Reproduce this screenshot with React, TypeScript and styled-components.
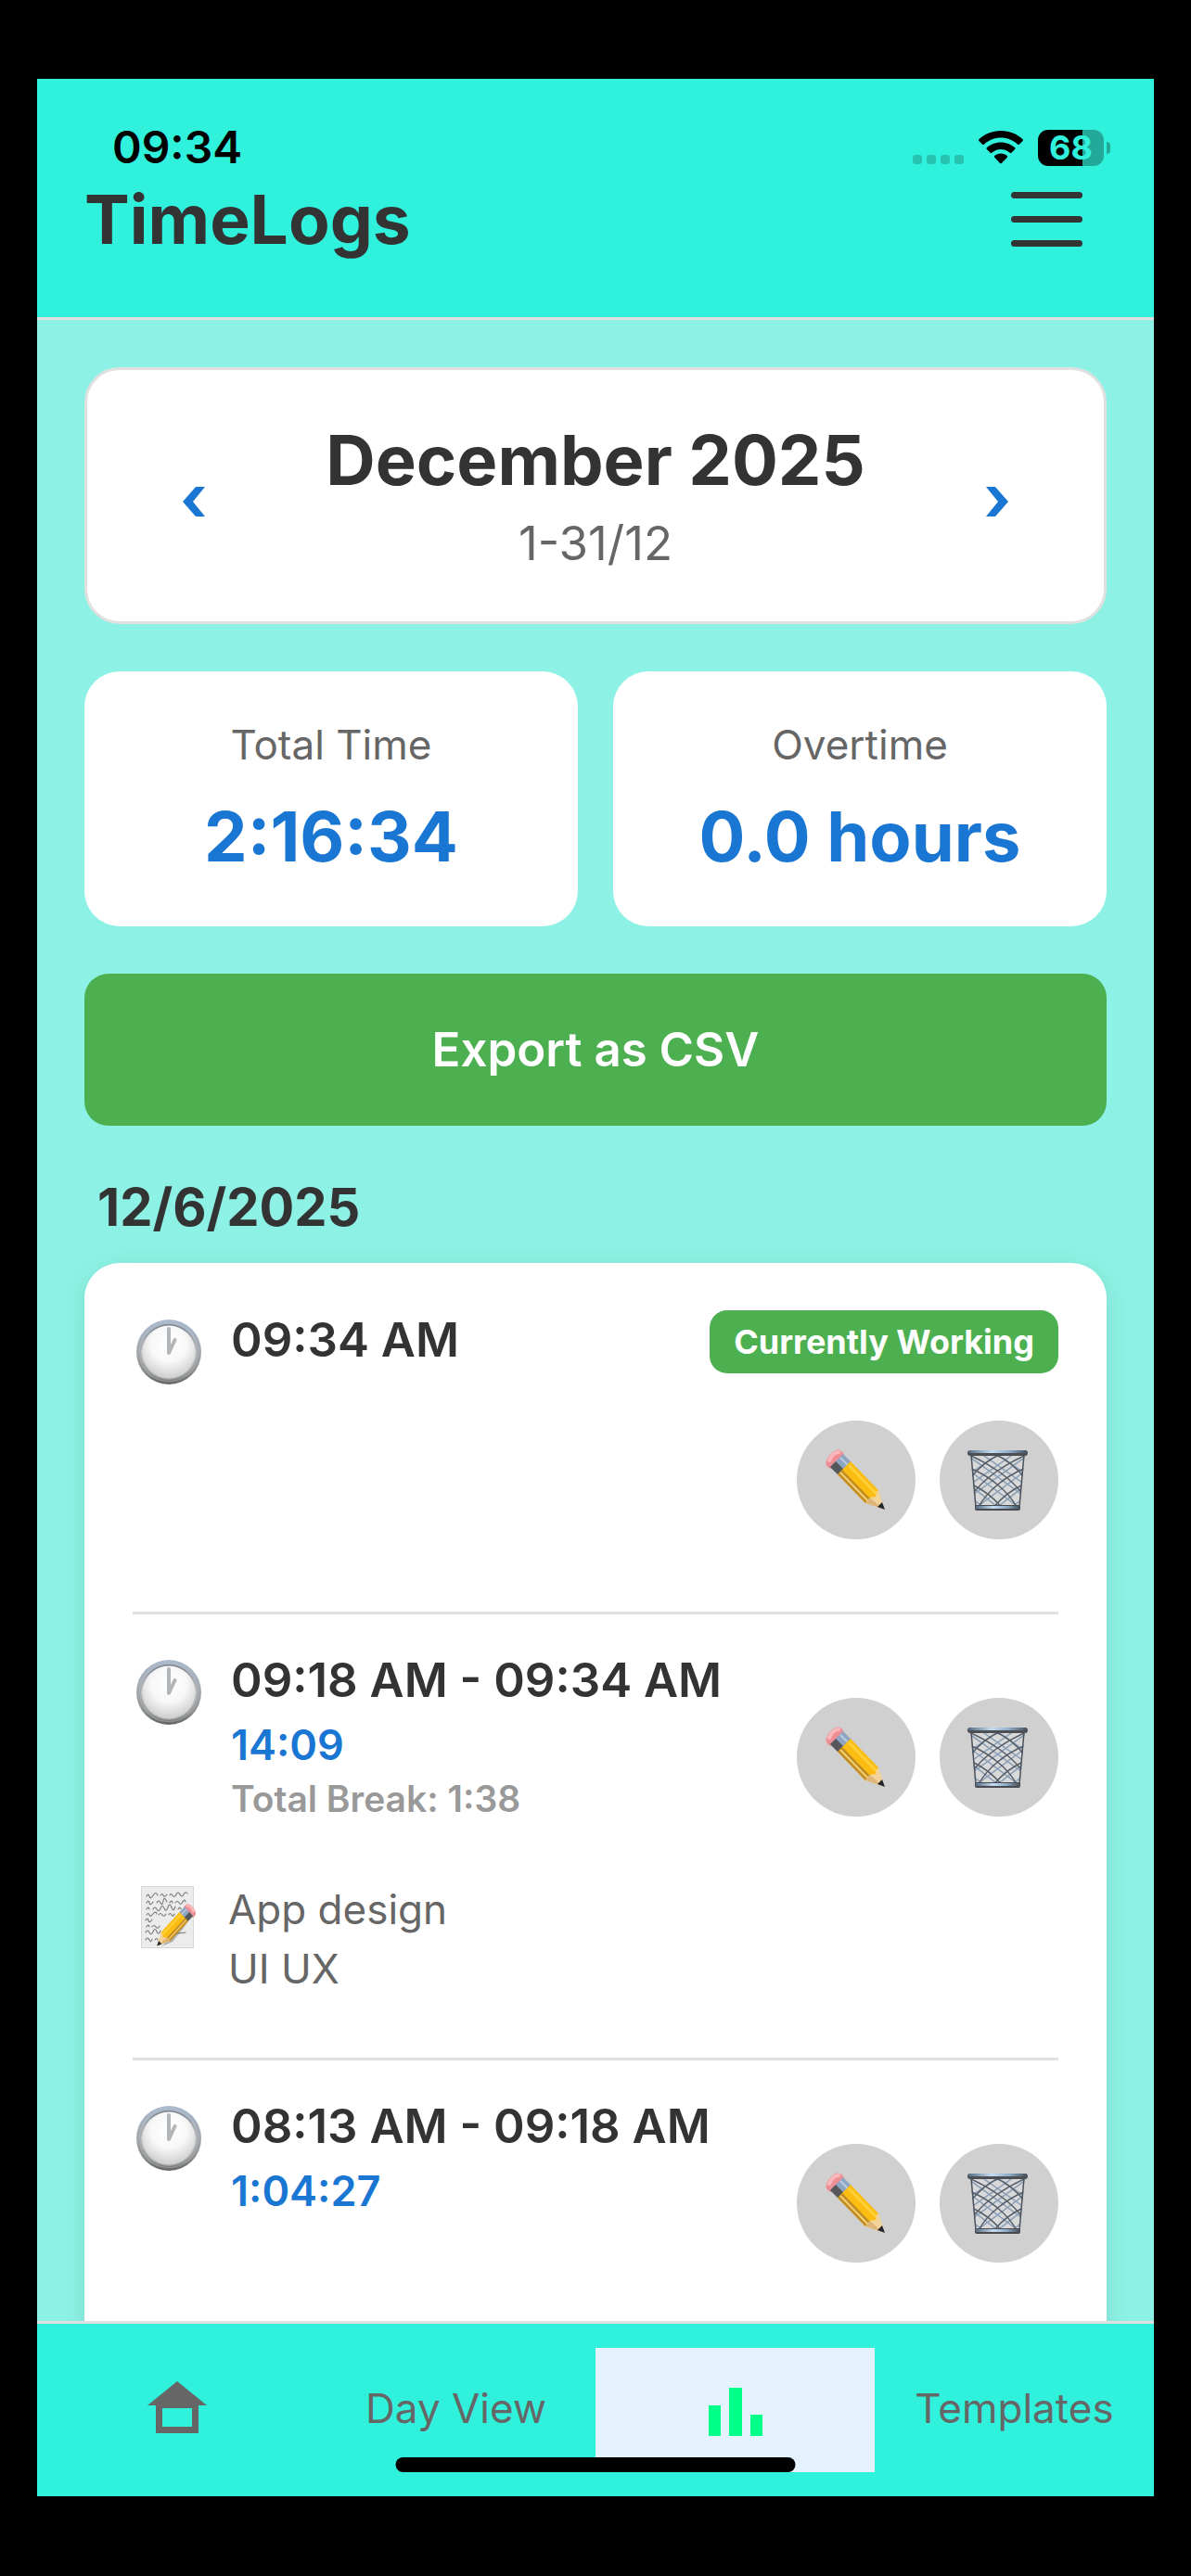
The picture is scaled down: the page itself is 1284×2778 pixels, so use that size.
import React from "react";
import styled, { createGlobalStyle } from "styled-components";

type Log = {
  id: number;
  time: string;
  duration?: string;
  pause?: string;
  working?: boolean;
  notes?: string[];
};

const logs: Log[] = [
  { id: 1, time: "09:34 AM", working: true },
  {
    id: 2,
    time: "09:18 AM - 09:34 AM",
    duration: "14:09",
    pause: "Total Break: 1:38",
    notes: ["App design", "UI UX"],
  },
  { id: 3, time: "08:13 AM - 09:18 AM", duration: "1:04:27" },
];

const WifiIcon = () => (
  <svg width="48" height="36" viewBox="0 0 48 36" aria-hidden="true">
    <path
      d="M24 0C33.400 0 41.800 3.700 47.600 9.200Q48.400 10 47.600 10.900L43.800 14.700Q43 15.500 42.100 14.700C37.400 10.300 31 7.600 24 7.600S10.600 10.300 5.900 14.700Q5 15.500 4.200 14.700L.4 10.900Q-.4 10 .4 9.200C6.200 3.700 14.600 0 24 0Z"
    />
    <path
      d="M24 12.400C30 12.400 35.300 14.700 39.200 18.300Q40.100 19.100 39.200 20L35.400 23.800Q34.600 24.600 33.700 23.800C31.100 21.400 27.700 20 24 20S16.900 21.400 14.300 23.800Q13.400 24.600 12.600 23.800L8.800 20Q7.900 19.100 8.800 18.300C12.700 14.700 18 12.400 24 12.400Z"
    />
    <path
      d="M24 24.600C26.700 24.600 29 25.500 30.800 27Q31.600 27.800 30.800 28.700L24.900 34.900Q24 35.800 23.100 34.900L17.200 28.700Q16.400 27.800 17.200 27C19 25.500 21.300 24.600 24 24.600Z"
    />
  </svg>
);

const Chevron = ({ flip }: { flip?: boolean }) => (
  <svg width="24" height="46" viewBox="0 0 24 46" aria-hidden="true">
    <path
      d={flip ? "M0 13H10L24 29L10 45H0L13 29Z" : "M24 13H14L0 29L14 45H24L11 29Z"}
      fill="#1976d2"
    />
  </svg>
);

const ClockIcon = () => (
  <svg width="70" height="70" viewBox="0 0 70 70" aria-hidden="true">
    <defs>
      <linearGradient id="rim" x1="0" y1="0" x2="0" y2="1">
        <stop offset="0" stopColor="#a9b9cf" />
        <stop offset="0.5" stopColor="#a5a8ab" />
        <stop offset="0.8" stopColor="#8e8f8f" />
        <stop offset="1" stopColor="#626464" />
      </linearGradient>
      <linearGradient id="innerRim" x1="0" y1="0" x2="0" y2="1">
        <stop offset="0" stopColor="#77808c" />
        <stop offset="0.5" stopColor="#c9c9c9" />
        <stop offset="1" stopColor="#a0a2a2" />
      </linearGradient>
      <radialGradient id="face" cx="0.5" cy="0.35" r="0.68">
        <stop offset="0" stopColor="#ffffff" />
        <stop offset="0.5" stopColor="#f8f8f8" />
        <stop offset="1" stopColor="#c9c9c9" />
      </radialGradient>
    </defs>
    <circle cx="35" cy="35" r="35" fill="url(#rim)" />
    <circle cx="35" cy="35" r="31.500" fill="none" stroke="#b5bbc3" strokeWidth="1.500" opacity="0.5" />
    <circle cx="35" cy="35" r="30" fill="url(#innerRim)" />
    <circle cx="35" cy="35" r="28.500" fill="url(#face)" />
    <path
      d="M35 10V36L41.500 22"
      fill="none"
      stroke="#b3b6b9"
      strokeWidth="4"
      strokeLinecap="round"
      strokeLinejoin="round"
    />
  </svg>
);

const PencilShape = () => (
  <>
    <path d="M2 17C-1 13 8 1 14 .5C17 .3 20 3 21 6L8 21C5 21 3 19 2 17Z" fill="#ee8f95" />
    <path d="M5 12C7 7 11 3 15 3" fill="none" stroke="#f9b9bb" strokeWidth="4" strokeLinecap="round" />
    <path d="M20 5L29 14L15 28L6 19Z" fill="#8fa6c2" />
    <path d="M12 13L21 22L15 28L6 19Z" fill="#56575a" />
    <path d="M17 9L26 18" stroke="#bccbe0" strokeWidth="2" />
    <path d="M28 13L58 44L59 53L44 58L14 27Z" fill="#fcbd12" />
    <path d="M14 27L19 22L50 54L44 58Z" fill="#c18b22" />
    <path d="M17 25L47 56" stroke="#f1cf72" strokeWidth="2" />
    <path d="M26 17L56 48" stroke="#ffd03a" strokeWidth="3" />
    <path d="M58 44L65 65L44 58L49 52L55 51L56 46Z" fill="#f3d39a" />
    <path d="M44 58L49 52L62 64Z" fill="#dfb678" />
    <path d="M62 57L65 65L57 62Z" fill="#23262d" />
  </>
);

const PencilIcon = () => (
  <svg width="68" height="66" viewBox="0 0 68 66" aria-hidden="true">
    <PencilShape />
  </svg>
);

const TrashIcon = () => (
  <svg width="68" height="66" viewBox="0 0 68 66" aria-hidden="true">
    <defs>
      <clipPath id="basket">
        <path d="M3 5H62L56 62H9Z" />
      </clipPath>
      <linearGradient id="metal" x1="0" x2="1" y1="0" y2="0">
        <stop offset="0" stopColor="#566d86" />
        <stop offset="0.4" stopColor="#c5dcf0" />
        <stop offset="0.7" stopColor="#8eabc7" />
        <stop offset="1" stopColor="#46525f" />
      </linearGradient>
    </defs>
    <path d="M3 5H62L56 62H9Z" fill="#ffffff" opacity="0.2" />
    <g clipPath="url(#basket)" fill="none">
      <path
        d="M-10 14L60 66M-6 2L66 54M8 0L68 42M24 0L68 30M-6 32L40 68M-6 46L26 68M75 14L5 66M71 2L-1 54M57 0L-3 42M41 0L-3 30M71 32L25 68M71 46L39 68"
        stroke="#8a9fb7"
        strokeWidth="1.500"
      />
      <path
        d="M2 6C20 14 48 30 62 52M2 20C22 28 44 44 54 64M5 38C18 44 30 54 38 64M26 4C42 10 54 20 64 34M63 6C45 14 17 30 3 52M63 20C43 28 21 44 11 64M60 38C47 44 35 54 27 64M39 4C23 10 11 20 1 34"
        stroke="#535c67"
        strokeWidth="1.500"
      />
    </g>
    <path d="M4 6L9 62M61 6L56 62" stroke="#4a525b" strokeWidth="1.500" />
    <rect x="0" y="1" width="65" height="6" rx="3" fill="#4c5054" />
    <rect x="1" y="1" width="63" height="3" rx="2" fill="url(#metal)" />
    <rect x="8" y="60" width="49" height="6" rx="2" fill="#494b50" />
    <rect x="9" y="61" width="47" height="3" fill="url(#metal)" />
  </svg>
);

const MemoIcon = () => (
  <svg width="62" height="68" viewBox="0 0 62 68" aria-hidden="true">
    <rect x="0.500" y="0.500" width="56" height="66" fill="#ececec" stroke="#d6d6d6" />
    <path
      d="M6 11q2-4 3 0t4-1t5 0M21 10q2-3 3 0t4-1M31 10q1-3 3 0t4-1t4 0t4 0t4-1M6 18q2-4 3 0t4-1M17 18q2-4 4 0t3-2t4 1M31 18q2-4 3 0M37 18q2-3 4 0t4-1t3 0M6 25q2-4 3 0M13 25q2-4 4 0t4-1t4 0t4-1t4 0t4-1M40 25q2-4 3 0M6 31q2-3 3 0t4-1t4 0M19 31q2-3 4 0t4-1M30 31q1-3 3 0t3-1M5 37q2-4 3 0t4-1M6 44q2-4 3 0M12 44q2-3 4 0t4-1M5 50q2-4 4 0t4-1t4 0t4-1M5 58q2-4 4 0t3-1M15 58q2-3 3 0M38 51q4 0 10-1"
      fill="none"
      stroke="#777777"
      strokeWidth="1.100"
      strokeLinecap="round"
    />
    <path d="M22 65L50 40L58 30L34 60Z" fill="#555555" opacity="0.4" />
    <g transform="translate(60 19) scale(-.66 .7)">
      <PencilShape />
    </g>
  </svg>
);

const HomeIcon = () => (
  <svg width="64" height="58" viewBox="0 0 64 58" aria-hidden="true">
    <path d="M32 0L64 26H0Z" fill="#666666" />
    <path d="M9 25H55V56H9ZM16 29V49H48V29Z" fill="#666666" fillRule="evenodd" />
  </svg>
);

const ChartIcon = () => (
  <svg width="58" height="60" viewBox="0 0 58 60" aria-hidden="true">
    <path d="M0 27H13V60H0ZM22 8H36V60H22ZM45 37H58V60H45Z" fill="#00ff88" />
  </svg>
);

const LogItem = ({ log }: { log: Log }) => (
  <Entry>
    <EntryTop>
      <ClockSlot>
        <ClockIcon />
      </ClockSlot>
      <Times>
        <Time>{log.time}</Time>
        {log.duration && <Duration>{log.duration}</Duration>}
        {log.pause && <Break>{log.pause}</Break>}
      </Times>
      <Side>
        {log.working && <Badge>Currently Working</Badge>}
        <Actions>
          <RoundButton type="button" aria-label="Edit">
            <PencilIcon />
          </RoundButton>
          <RoundButton type="button" aria-label="Delete">
            <TrashIcon />
          </RoundButton>
        </Actions>
      </Side>
    </EntryTop>
    {log.notes && (
      <Notes>
        <MemoSlot>
          <MemoIcon />
        </MemoSlot>
        <div>
          {log.notes.map((note) => (
            <Note key={note}>{note}</Note>
          ))}
        </div>
      </Notes>
    )}
  </Entry>
);

const App = () => {
  return (
    <Page>
      <GlobalStyle />
      <Screen>
        <Header>
          <StatusBar>
            <Clock>09:34</Clock>
            <StatusIcons>
              <Dots>
                <i />
                <i />
                <i />
                <i />
              </Dots>
              <WifiIcon />
              <BatteryWrap>
                <Battery>68</Battery>
                <BatteryTip />
              </BatteryWrap>
            </StatusIcons>
          </StatusBar>
          <TitleRow>
            <Title>TimeLogs</Title>
            <MenuButton type="button" aria-label="Menu">
              <span />
              <span />
              <span />
            </MenuButton>
          </TitleRow>
        </Header>

        <Content>
          <MonthCard>
            <MonthButton type="button" aria-label="Previous month">
              <Chevron />
            </MonthButton>
            <MonthText>
              <Month>December 2025</Month>
              <Range>1-31/12</Range>
            </MonthText>
            <MonthButton type="button" aria-label="Next month">
              <Chevron flip />
            </MonthButton>
          </MonthCard>

          <Stats>
            <Stat>
              <StatLabel>Total Time</StatLabel>
              <StatValue>2:16:34</StatValue>
            </Stat>
            <Stat>
              <StatLabel>Overtime</StatLabel>
              <StatValue>0.0 hours</StatValue>
            </Stat>
          </Stats>

          <ExportButton type="button">Export as CSV</ExportButton>

          <DayTitle>12/6/2025</DayTitle>
          <LogCard>
            {logs.map((log) => (
              <LogItem key={log.id} log={log} />
            ))}
          </LogCard>
        </Content>

        <TabBar>
          <Tab href="#home" aria-label="Home">
            <HomeIcon />
          </Tab>
          <Tab href="#day">Day View</Tab>
          <Tab href="#logs" aria-label="Time logs" $active>
            <ChartIcon />
          </Tab>
          <Tab href="#templates">Templates</Tab>
          <HomeIndicator />
        </TabBar>
      </Screen>
    </Page>
  );
};

export default App;

const GlobalStyle = createGlobalStyle`
  * {
    box-sizing: border-box;
  }

  body {
    margin: 0;
    background-color: #000;
    color: #333;
    font-family: Inter, "Liberation Sans", sans-serif;
  }

  h1, h2, h3, p, ul {
    margin: 0;
    padding: 0;
  }

  button {
    border: none;
    padding: 0;
    font-family: inherit;
    cursor: pointer;
  }

  svg {
    display: block;
    flex-shrink: 0;
  }
`;

const Page = styled.div`
  width: 100%;
  height: 100vh;
  padding: 85px 40px 86px;
  background-color: #000;
`;

const Screen = styled.div`
  height: 100%;
  display: flex;
  flex-direction: column;
  background-color: #8df2e5;
`;

const Header = styled.header`
  flex-shrink: 0;
  padding: 50px 47px 60px 51px;
  background-color: #30f2dc;
  border-bottom: 3px solid #e0e0e0;
`;

const StatusBar = styled.div`
  height: 48px;
  padding-left: 30px;
  display: flex;
  justify-content: space-between;
  align-items: center;
`;

const Clock = styled.div`
  color: #000;
  font-size: 48px;
  font-weight: 600;
  line-height: 48px;
`;

const StatusIcons = styled.div`
  display: flex;
  align-items: center;
  gap: 16px;
`;

const Dots = styled.div`
  height: 36px;
  display: flex;
  align-items: flex-end;
  gap: 5px;

  i {
    width: 10px;
    height: 10px;
    border-radius: 3px;
    background-color: #28c2b0;
  }
`;

const BatteryWrap = styled.div`
  display: flex;
  align-items: center;
  gap: 3px;
`;

const Battery = styled.div`
  width: 71px;
  height: 39px;
  border-radius: 11px;
  background: linear-gradient(to right, #000 68%, #22a99a 68%);
  color: #30f2dc;
  font-size: 36px;
  font-weight: 700;
  line-height: 39px;
  text-align: center;
`;

const BatteryTip = styled.div`
  width: 4px;
  height: 13px;
  border-radius: 0 4px 4px 0;
  background-color: #22a99a;
`;

const TitleRow = styled.div`
  margin-top: 8px;
  padding-right: 30px;
  display: flex;
  justify-content: space-between;
  align-items: center;
`;

const Title = styled.h1`
  font-size: 73px;
  font-weight: 700;
  line-height: 91px;
`;

const MenuButton = styled.button`
  width: 77px;
  display: flex;
  flex-direction: column;
  gap: 19px;
  background: none;

  span {
    height: 7px;
    border-radius: 4px;
    background-color: #333;
  }
`;

const Content = styled.main`
  flex: 1;
  min-height: 0;
  padding: 51px 51px 0;
  overflow-y: auto;
  scrollbar-width: none;
`;

const MonthCard = styled.section`
  padding: 52px 51px;
  display: flex;
  justify-content: space-between;
  align-items: center;
  background-color: #fff;
  border: 3px solid #e0e0e0;
  border-radius: 38px;
`;

const MonthButton = styled.button`
  width: 128px;
  height: 128px;
  display: flex;
  justify-content: center;
  align-items: center;
  background: none;
`;

const MonthText = styled.div`
  text-align: center;
`;

const Month = styled.h2`
  font-size: 74px;
  font-weight: 700;
  line-height: 91px;
`;

const Range = styled.p`
  margin-top: 12px;
  color: #666;
  font-size: 51px;
  line-height: 64px;
`;

const Stats = styled.section`
  margin-top: 51px;
  display: grid;
  grid-template-columns: 1fr 1fr;
  gap: 38px;
`;

const Stat = styled.div`
  padding: 51px 26px;
  background-color: #fff;
  border-radius: 38px;
  text-align: center;
`;

const StatLabel = styled.p`
  color: #666;
  font-size: 44px;
  line-height: 56px;
`;

const StatValue = styled.p`
  margin-top: 26px;
  color: #1976d2;
  font-size: 74px;
  font-weight: 700;
  line-height: 91px;
`;

const ExportButton = styled.button`
  width: 100%;
  margin-top: 51px;
  padding: 50px;
  border-radius: 26px;
  background-color: #4caf50;
  color: #fff;
  font-size: 51px;
  font-weight: 600;
  line-height: 64px;
`;

const DayTitle = styled.h3`
  margin: 52px 0 24px;
  padding-left: 14px;
  font-size: 56px;
  font-weight: 700;
  line-height: 72px;
`;

const LogCard = styled.ul`
  padding: 12px 52px 51px;
  background-color: #fff;
  border-radius: 38px;
  box-shadow: 0 6px 26px rgba(0, 0, 0, 0.1);
  list-style: none;
`;

const Entry = styled.li`
  padding: 39px 0;
  border-bottom: 3px solid #e0e0e0;

  &:last-child {
    border-bottom: none;
  }
`;

const EntryTop = styled.div`
  padding-bottom: 39px;
  display: flex;
  align-items: flex-start;
`;

const ClockSlot = styled.div`
  width: 106px;
  padding: 10px 0 0 4px;
  flex-shrink: 0;
`;

const MemoSlot = styled.div`
  width: 103px;
  padding: 7px 0 0 9px;
  flex-shrink: 0;
`;

const Times = styled.div`
  flex: 1;
  white-space: nowrap;
`;

const Time = styled.p`
  font-size: 51px;
  font-weight: 600;
  line-height: 64px;
`;

const Duration = styled.p`
  margin-top: 6px;
  color: #1976d2;
  font-size: 45px;
  font-weight: 600;
  line-height: 64px;
`;

const Break = styled.p`
  color: #999;
  font-size: 39px;
  font-weight: 600;
  line-height: 52px;
`;

const Side = styled.div`
  display: flex;
  flex-direction: column;
  align-items: flex-end;
`;

const Badge = styled.span`
  padding: 8px 26px;
  border-radius: 19px;
  background-color: #4caf50;
  color: #fff;
  font-size: 36px;
  font-weight: 700;
  line-height: 52px;
`;

const Actions = styled.div`
  margin-top: 51px;
  display: flex;
  gap: 26px;
`;

const RoundButton = styled.button`
  width: 128px;
  height: 128px;
  display: flex;
  justify-content: center;
  align-items: center;
  border-radius: 50%;
  background-color: #d0d0d0;
`;

const Notes = styled.div`
  padding: 22px 0 25px;
  display: flex;
`;

const Note = styled.p`
  color: #666;
  font-size: 44px;
  line-height: 64px;
`;

const TabBar = styled.nav`
  position: relative;
  flex-shrink: 0;
  padding: 26px 0;
  display: flex;
  background-color: #30f2dc;
  border-top: 3px solid #e0e0e0;
`;

const Tab = styled.a<{ $active?: boolean }>`
  flex: 1 1 0;
  height: 134px;
  padding-bottom: 4px;
  display: flex;
  justify-content: center;
  align-items: center;
  background-color: ${({ $active }) => ($active ? "#e3f2fd" : "transparent")};
  color: #666;
  font-size: 44px;
  text-decoration: none;
`;

const HomeIndicator = styled.div`
  position: absolute;
  bottom: 26px;
  left: 50%;
  width: 431px;
  height: 16px;
  border-radius: 8px;
  background-color: #000;
  transform: translateX(-50%);
`;
